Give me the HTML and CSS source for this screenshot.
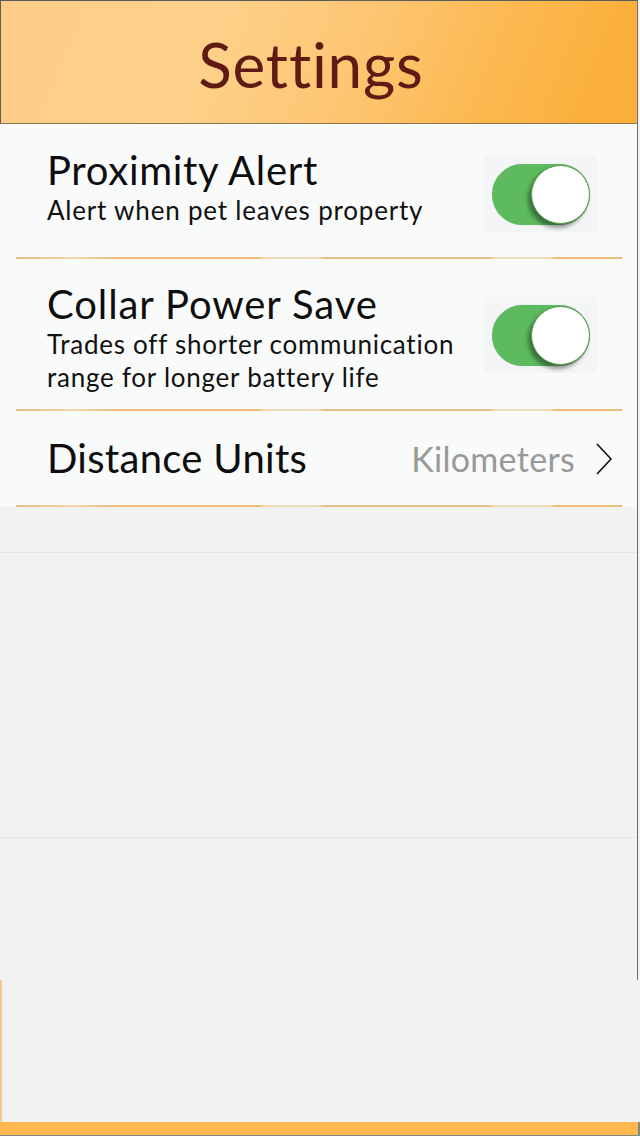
FILE: index.html
```html
<!DOCTYPE html>
<html>
<head>
<meta charset="utf-8">
<title>Settings</title>
<link rel="stylesheet" href="styles.css">
</head>
<body>
<div class="screen">
  <div class="main">
    <header class="header">
      <h1 class="header-title">Settings</h1>
    </header>
    <section class="list">
      <div class="row row-alert">
        <div class="row-text">
          <div class="title title-a">Proximity Alert</div>
          <div class="sub">Alert when pet leaves property</div>
        </div>
        <div class="toggle-box">
          <div class="toggle on"><div class="knob"></div></div>
        </div>
      </div>
      <div class="sep"></div>
      <div class="row row-power">
        <div class="row-text">
          <div class="title title-b">Collar Power Save</div>
          <div class="sub sub-b">Trades off shorter communication<br>range for longer battery life</div>
        </div>
        <div class="toggle-box">
          <div class="toggle on"><div class="knob"></div></div>
        </div>
      </div>
      <div class="sep"></div>
      <div class="row row-units">
        <div class="title title-c">Distance Units</div>
        <div class="value">
          <span class="value-text">Kilometers</span>
          <svg class="chevron" width="18" height="32" viewBox="0 0 18 32"><polyline points="2,1 16,16 2,31" fill="none" stroke="#111" stroke-width="1.6"/></svg>
        </div>
      </div>
      <div class="sep"></div>
    </section>
    <section class="empty">
      <div class="gap-a"></div>
      <div class="faint"></div>
      <div class="gap-b"></div>
      <div class="faint"></div>
    </section>
  </div>
  <div class="lower"></div>
  <div class="tabbar"></div>
</div>
</body>
</html>
```

FILE: styles.css
```css
html, body {
  margin: 0;
  padding: 0;
}
body {
  background: #f2f2f2;
  font-family: Lato, "Open Sans", sans-serif;
  color: #111;
  font-variant-ligatures: none;
}
.screen {
  width: 640px;
  height: 1136px;
  display: flex;
  flex-direction: column;
  overflow: hidden;
}
.main {
  width: 638px;
  height: 980px;
  box-sizing: border-box;
  border-right: 1px solid #6f6f6f;
  display: flex;
  flex-direction: column;
  background: #f2f2f2;
}
.header {
  height: 124px;
  box-sizing: border-box;
  border-top: 1px solid #5c5c5c;
  border-left: 1px solid #5c5c5c;
  border-bottom: 1px solid #8a7552;
  background: linear-gradient(112deg, #fdcd88 0%, #fed089 33%, #fdc673 55%, #fcb952 75%, #fbb03c 92%);
  display: flex;
  align-items: center;
  justify-content: center;
}
.header-title {
  margin: 0;
  font-weight: 400;
  font-size: 62px;
  letter-spacing: 0.8px;
  line-height: 1;
  color: #5f1b13;
  padding-top: 4px;
  padding-right: 16px;
}
.list {
  background: #f9fbfa;
  padding-top: 1px;
  display: flex;
  flex-direction: column;
}
.row {
  display: flex;
  align-items: center;
  justify-content: space-between;
  padding-left: 47px;
}
.row-alert {
  height: 132px;
}
.row-power {
  height: 150px;
}
.row-units {
  height: 94px;
  padding-right: 24px;
}
.row-text {
  display: flex;
  flex-direction: column;
}
.row-alert .row-text {
  margin-bottom: 8px;
}
.row-power .row-text {
  align-self: flex-start;
  padding-top: 21px;
}
.title {
  font-weight: 400;
  font-size: 40px;
  color: #0e0e0e;
  white-space: nowrap;
}
.title-a {
  line-height: 46px;
  letter-spacing: 0.7px;
}
.title-b {
  line-height: 48px;
  letter-spacing: 0.9px;
}
.title-c {
  line-height: 48px;
  letter-spacing: 0.3px;
}
.sub {
  font-size: 26px;
  line-height: 34px;
  letter-spacing: 0.8px;
  color: #111;
  white-space: nowrap;
}
.sub-b {
  line-height: 33px;
  letter-spacing: 0.75px;
}
.toggle-box {
  width: 113px;
  height: 76px;
  box-sizing: border-box;
  background: #f4f5f7;
  margin-right: 40px;
  padding: 8px 7px 7px 8px;
}
.row-alert .toggle-box {
  margin-top: 5px;
}
.row-power .toggle-box {
  margin-top: 2px;
}
.toggle {
  width: 98px;
  height: 61px;
  border-radius: 31px;
  background: #5dba5e;
  display: flex;
  align-items: center;
  justify-content: flex-end;
  box-shadow: 0 0 1px rgba(0, 0, 0, 0.25);
}
.knob {
  width: 57px;
  height: 57px;
  border-radius: 50%;
  background: #ffffff;
  border: 1px solid #5a9a52;
  box-shadow: -3px 4px 4px rgba(0, 0, 0, 0.4);
}
.value {
  display: flex;
  align-items: center;
  gap: 20px;
}
.value-text {
  font-size: 34px;
  letter-spacing: 0.3px;
  color: #999999;
}
.chevron {
  display: block;
  margin-top: 2px;
}
.sep {
  height: 2px;
  margin: 0 15px 0 16px;
  background: linear-gradient(90deg, #e6bd83 0%, #f1d6ae 10%, #ebbd7a 16%, #ebbd7a 40%, #f1d9b6 41%, #f1d9b6 50%, #e6bf86 51%, #e6bf86 78%, #f1dbba 79%, #f1dbba 88%, #ebbd7a 89%);
}
.empty {
  flex: 1;
  display: flex;
  flex-direction: column;
}
.gap-a {
  height: 45px;
}
.gap-b {
  height: 284px;
}
.faint {
  height: 1px;
  background: #eee5da;
}
.lower {
  height: 142px;
  box-sizing: border-box;
  border-left: 2px solid #f2c993;
  background: #f2f2f2;
}
.tabbar {
  height: 14px;
  box-sizing: border-box;
  background: #ffb84f;
  border-bottom: 1px solid #858585;
  border-right: 2px solid #858585;
}
```
